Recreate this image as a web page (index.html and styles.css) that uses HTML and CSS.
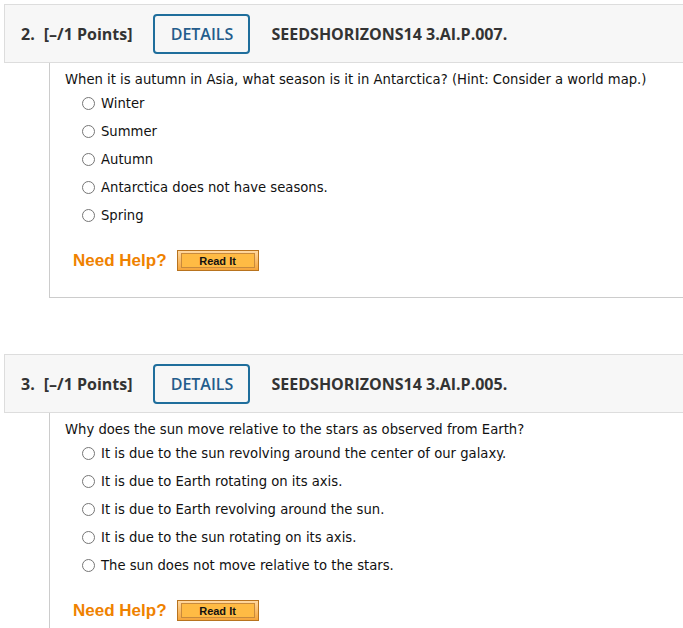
FILE: index.html
```html
<!DOCTYPE html>
<html>
<head>
<meta charset="utf-8">
<link rel="stylesheet" href="styles.css">
</head>
<body>
<div class="page">
  <div class="question">
    <div class="q-head">
      <span class="q-num">2.</span>
      <span class="q-points">[–/1 Points]</span>
      <span class="details">DETAILS</span>
      <span class="q-code">SEEDSHORIZONS14 3.AI.P.007.</span>
    </div>
    <div class="q-body">
      <p class="q-text">When it is autumn in Asia, what season is it in Antarctica? (Hint: Consider a world map.)</p>
      <ul class="options">
        <li class="option"><span class="radio"></span><span>Winter</span></li>
        <li class="option"><span class="radio"></span><span>Summer</span></li>
        <li class="option"><span class="radio"></span><span>Autumn</span></li>
        <li class="option"><span class="radio"></span><span>Antarctica does not have seasons.</span></li>
        <li class="option"><span class="radio"></span><span>Spring</span></li>
      </ul>
      <div class="help">
        <span class="help-label">Need Help?</span>
        <span class="read-btn"><span class="read-inner">Read It</span></span>
      </div>
    </div>
  </div>

  <div class="question">
    <div class="q-head">
      <span class="q-num">3.</span>
      <span class="q-points">[–/1 Points]</span>
      <span class="details">DETAILS</span>
      <span class="q-code">SEEDSHORIZONS14 3.AI.P.005.</span>
    </div>
    <div class="q-body">
      <p class="q-text">Why does the sun move relative to the stars as observed from Earth?</p>
      <ul class="options">
        <li class="option"><span class="radio"></span><span>It is due to the sun revolving around the center of our galaxy.</span></li>
        <li class="option"><span class="radio"></span><span>It is due to Earth rotating on its axis.</span></li>
        <li class="option"><span class="radio"></span><span>It is due to Earth revolving around the sun.</span></li>
        <li class="option"><span class="radio"></span><span>It is due to the sun rotating on its axis.</span></li>
        <li class="option"><span class="radio"></span><span>The sun does not move relative to the stars.</span></li>
      </ul>
      <div class="help">
        <span class="help-label">Need Help?</span>
        <span class="read-btn"><span class="read-inner">Read It</span></span>
      </div>
    </div>
  </div>
</div>
</body>
</html>
```

FILE: styles.css
```css
html, body {
  margin: 0;
  padding: 0;
  background: #ffffff;
  overflow: hidden;
}

.page {
  padding: 4px 0 0 4px;
}

.question {
  margin-bottom: 56px;
}

.q-head {
  display: flex;
  align-items: center;
  height: 57px;
  background: #f7f7f7;
  border-top: 1px solid #dddddd;
  border-bottom: 1px solid #dddddd;
  border-left: 1px solid #dddddd;
  padding-left: 16px;
  font-family: "Open Sans", "DejaVu Sans", sans-serif;
  color: #333333;
}

.q-num {
  font-weight: 700;
  font-size: 16px;
  margin-right: 9px;
}

.q-points {
  font-weight: 700;
  font-size: 16px;
  margin-right: 21px;
}

.details {
  box-sizing: border-box;
  display: inline-flex;
  align-items: center;
  justify-content: center;
  width: 97px;
  height: 40px;
  border: 2px solid #1f6e9c;
  border-radius: 4px;
  color: #245d8c;
  font-size: 16px;
  font-weight: 600;
  margin-right: 21px;
}

.q-code {
  font-weight: 700;
  font-size: 16px;
  color: #333333;
}

.q-body {
  margin-left: 45px;
  border-left: 1px solid #cccccc;
  border-bottom: 1px solid #cccccc;
  padding: 9px 0 26px 15px;
  font-family: "DejaVu Sans", Verdana, sans-serif;
  font-size: 13.2px;
  color: #111111;
}

.q-text {
  margin: 0 0 1px 0;
  line-height: 16px;
}

.options {
  list-style: none;
  margin: 0;
  padding: 0 0 0 17px;
}

.option {
  display: flex;
  align-items: center;
  height: 28px;
}

.radio {
  box-sizing: border-box;
  width: 13px;
  height: 13px;
  border: 1px solid #767676;
  border-radius: 50%;
  background: #ffffff;
  margin-right: 6px;
  flex: none;
}

.help {
  display: flex;
  align-items: center;
  margin-top: 21px;
  padding-left: 8px;
}

.help-label {
  font-family: "Liberation Sans", Arial, sans-serif;
  font-weight: 700;
  font-size: 17px;
  color: #ef8200;
  margin-right: 10px;
}

.read-btn {
  box-sizing: border-box;
  display: inline-block;
  width: 82px;
  height: 21px;
  border: 1px solid #b8731e;
  background: linear-gradient(#ffd8a0, #f6a53a);
  padding: 2px 3px 2px 3px;
}

.read-inner {
  box-sizing: border-box;
  display: flex;
  align-items: center;
  justify-content: center;
  height: 100%;
  border: 1px solid #c88a3c;
  background: #ffbb44;
  font-family: "Liberation Sans", Arial, sans-serif;
  font-weight: 700;
  font-size: 11px;
  color: #111111;
}
```
